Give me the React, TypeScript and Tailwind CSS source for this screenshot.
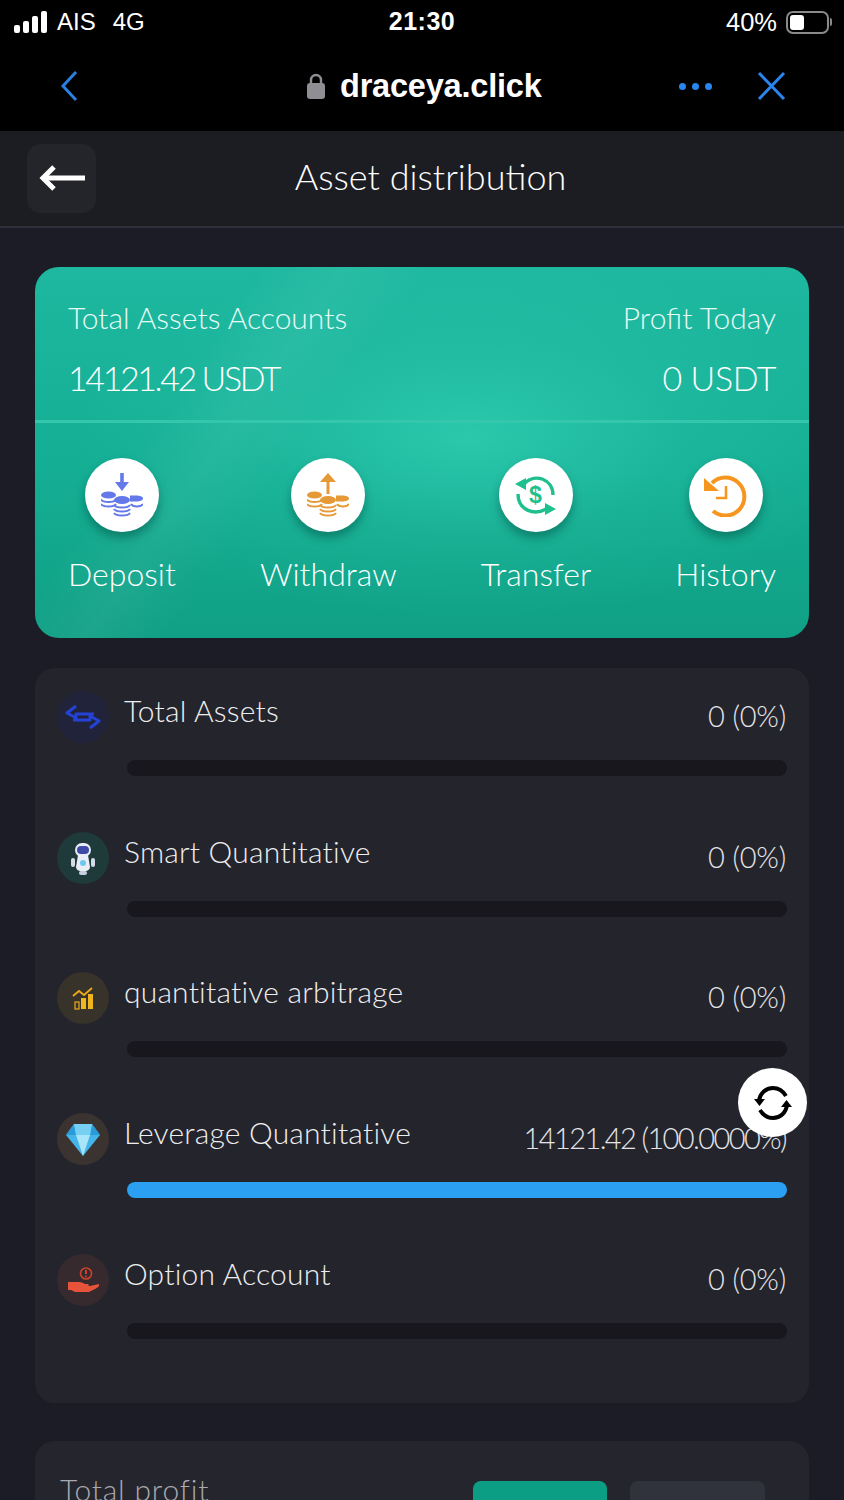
import type { ReactNode } from 'react';

function Coins({ color }: { color: string }) {
  const arcs = (x: number, w: number, ys: number[]) =>
    ys.map((y) => (
      <path key={`${x}-${y}`} d={`M${x} ${y}c2 3.4 ${w - 2} 3.4 ${w} 0`} fill="none" stroke={color} strokeWidth="2" />
    ));
  return (
    <>
      <ellipse cx="7.5" cy="22" rx="7.5" ry="3.6" fill={color} />
      {arcs(0, 15, [26.5, 31])}
      <path d="M29 22.5h6c4 0 7 1 7 3s-3 3-7 3h-6z" fill={color} />
      {arcs(30, 12, [31])}
      <ellipse cx="21" cy="27" rx="8" ry="4" fill={color} />
      {arcs(13, 16, [32, 36, 40])}
    </>
  );
}

function ActionIcon({ children }: { children: ReactNode }) {
  return (
    <div className="w-[74px] h-[74px] rounded-full bg-white flex items-center justify-center shadow-[0_6px_10px_rgba(0,70,60,0.45)]">
      {children}
    </div>
  );
}

function DepositIcon() {
  return (
    <svg width="42" height="44" viewBox="0 0 42 44">
      <path d="M21 0v11" stroke="#6379ea" strokeWidth="3.6" />
      <path d="M14 9h14l-7 9z" fill="#6379ea" />
      <Coins color="#6379ea" />
    </svg>
  );
}

function WithdrawIcon() {
  return (
    <svg width="42" height="44" viewBox="0 0 42 44">
      <path d="M21 7v14" stroke="#e59a37" strokeWidth="3" />
      <path d="M13 9h16L21 0z" fill="#e59a37" />
      <Coins color="#e59a37" />
    </svg>
  );
}

function TransferIcon() {
  return (
    <svg width="42" height="42" viewBox="0 0 42 42" fill="none">
      <path d="M10 9C20 -1 38 5 38 21" stroke="#1fc08e" strokeWidth="3.4" />
      <path d="M0 10l11-6v12z" fill="#1fc08e" />
      <path d="M3 20c0 16 16 22 28 15" stroke="#1fc08e" strokeWidth="3.4" />
      <path d="M41 35l-11 6V29z" fill="#1fc08e" />
      <text x="20.5" y="29" textAnchor="middle" fontSize="23" fontWeight="700" fill="#1fc08e" fontFamily="Liberation Sans, sans-serif">$</text>
    </svg>
  );
}

function HistoryIcon() {
  return (
    <svg width="43" height="43" viewBox="0 0 43 43" fill="none">
      <path d="M8 9A19 19 0 1 1 9 37" stroke="#f7961f" strokeWidth="4" />
      <path d="M0 4l15 13H0z" fill="#f7961f" />
      <path d="M22 12v12H12" stroke="#f7961f" strokeWidth="2.6" />
    </svg>
  );
}

function SwapIcon() {
  return (
    <svg width="36" height="26" viewBox="0 0 36 26" fill="none" stroke="#2443d6" strokeWidth="3" strokeLinejoin="round">
      <path d="M11 2L2 9l9 5v-4h18" />
      <path d="M25 24l9-7-9-5v4H8" />
    </svg>
  );
}

function RobotIcon() {
  return (
    <svg width="26" height="36" viewBox="0 0 26 36">
      <rect x="1" y="18" width="4" height="9" rx="2" fill="#d5dbe8" />
      <rect x="21" y="18" width="4" height="9" rx="2" fill="#d5dbe8" />
      <path d="M8 15h10l2 12c0 6-14 6-14 0z" fill="#e8edf6" />
      <circle cx="13" cy="23" r="3" fill="#6fc6ef" />
      <rect x="5" y="3" width="16" height="14" rx="7" fill="#e8edf6" />
      <rect x="7" y="6" width="12" height="8" rx="4" fill="#3d4aa8" />
      <rect x="9" y="31" width="8" height="4" rx="2" fill="#c7cfdf" />
    </svg>
  );
}

function ChartIcon() {
  return (
    <svg width="22" height="23" viewBox="0 0 22 23" fill="none">
      <path d="M1 9l6-5 5 4 8-7" stroke="#eda91c" strokeWidth="1.8" />
      <rect x="3" y="15" width="4" height="7" stroke="#eda91c" strokeWidth="1.2" />
      <rect x="9" y="11" width="5" height="11" fill="#f0b41f" />
      <rect x="16" y="7" width="5" height="15" fill="#f0b41f" />
    </svg>
  );
}

function DiamondIcon() {
  return (
    <svg width="36" height="36" viewBox="0 0 36 36">
      <path d="M9 3h18l8 11-17 21L1 14z" fill="#45b4ea" />
      <path d="M11 14h14l-7 21z" fill="#a8e5f8" />
      <path d="M9 3l2 11H1zM27 3l-2 11h10z" fill="#2b9ad8" />
      <path d="M9 3h18l-2 11H11z" fill="#76d0f2" />
    </svg>
  );
}

function HandIcon() {
  return (
    <svg width="32" height="26" viewBox="0 0 32 26" fill="none">
      <circle cx="19" cy="6.5" r="5.5" stroke="#c9432d" strokeWidth="1.6" />
      <path d="M19 3v4" stroke="#c9432d" strokeWidth="2" />
      <circle cx="19" cy="9.5" r="1" fill="#c9432d" />
      <path d="M1 15h11c3 0 4 1 6 2h3c1 1 1 2 0 2h-5 7l9-2c1 2-1 3-4 5l-6 3H8l-4-2H1z" fill="#e4533a" />
    </svg>
  );
}

const rows = [
  { name: 'Total Assets', value: '0 (0%)', pct: 0, tint: 'bg-[#20233a]', icon: <SwapIcon />, tracking: 'tracking-[-0.2px]' },
  { name: 'Smart Quantitative', value: '0 (0%)', pct: 0, tint: 'bg-[#1f3a3a]', icon: <RobotIcon />, tracking: 'tracking-[-0.2px]' },
  { name: 'quantitative arbitrage', value: '0 (0%)', pct: 0, tint: 'bg-[#37322a]', icon: <ChartIcon />, tracking: 'tracking-[-0.2px]' },
  { name: 'Leverage Quantitative', value: '14121.42 (100.0000%)', pct: 100, tint: 'bg-[#3b3330]', icon: <DiamondIcon />, tracking: 'tracking-[-1.6px]' },
  { name: 'Option Account', value: '0 (0%)', pct: 0, tint: 'bg-[#372a2e]', icon: <HandIcon />, tracking: 'tracking-[-0.2px]' },
];

const actions = [
  { label: 'Deposit', icon: <DepositIcon /> },
  { label: 'Withdraw', icon: <WithdrawIcon /> },
  { label: 'Transfer', icon: <TransferIcon /> },
  { label: 'History', icon: <HistoryIcon /> },
];

export default function App() {
  return (
    <div className="relative h-[1500px] overflow-hidden bg-[#1b1c25] font-['Lato',sans-serif] font-light text-white">
      {/* phone chrome */}
      <div className="h-[131px] bg-black font-['Liberation_Sans',sans-serif]">
        <div className="h-[44px] pl-[14px] pr-[12px] flex items-center justify-between text-[24px]">
          <div className="flex items-center flex-1">
            <svg width="35" height="22" viewBox="0 0 35 22" fill="white">
              <rect x="0" y="14" width="6" height="8" rx="2" />
              <rect x="9" y="10" width="6" height="12" rx="2" />
              <rect x="18" y="5" width="6" height="17" rx="2" />
              <rect x="27" y="0" width="6" height="22" rx="2" />
            </svg>
            <span className="ml-[8px] font-normal">AIS</span>
            <span className="ml-[17px] font-normal">4G</span>
          </div>
          <span className="-ml-[2px] font-bold text-[25px] tracking-[0.5px]">21:30</span>
          <div className="flex items-center justify-end flex-1">
            <span className="text-[25.5px] font-normal -translate-x-[2px]">40%</span>
            <div className="ml-[7px] w-[43px] h-[23px] rounded-[7px] border-2 border-[#8a8a8a] p-[2px]">
              <div className="w-[14px] h-full rounded-[3px] bg-white" />
            </div>
            <div className="ml-[1px] w-[2px] h-[8px] rounded-r bg-[#8a8a8a]" />
          </div>
        </div>
        <div className="h-[84px] pl-[60px] pr-[58px] flex items-center">
          <svg width="18" height="32" viewBox="0 0 18 32" fill="none" stroke="#2a7fe0" strokeWidth="3">
            <path d="M16 2L3 16l13 14" />
          </svg>
          <svg className="ml-[228px]" width="20" height="28" viewBox="0 0 20 28" fill="#8e8e93">
            <path d="M5 12V8a5 5 0 0 1 10 0v4" fill="none" stroke="#8e8e93" strokeWidth="2.4" />
            <rect x="1" y="11" width="18" height="16" rx="3" />
          </svg>
          <span className="ml-[14px] text-[32.5px] font-bold tracking-[-0.2px]">draceya.click</span>
          <div className="ml-auto mr-[45px] flex items-center gap-[6px]">
            <span className="w-[7px] h-[7px] rounded-full bg-[#2a85ee]" />
            <span className="w-[7px] h-[7px] rounded-full bg-[#2a85ee]" />
            <span className="w-[7px] h-[7px] rounded-full bg-[#2a85ee]" />
          </div>
          <svg width="29" height="30" viewBox="0 0 29 30" fill="none" stroke="#2a85ee" strokeWidth="3">
            <path d="M2 2l25 26M27 2L2 28" />
          </svg>
        </div>
      </div>

      {/* header */}
      <div className="h-[97px] bg-[#1c1d22] border-b-2 border-[#2e2d39] pl-[27px] flex items-center">
        <div className="w-[69px] h-[69px] rounded-[14px] bg-[#24242b] flex items-center justify-center">
          <svg width="46" height="28" viewBox="0 0 46 28" fill="none" stroke="white" strokeWidth="5">
            <path d="M46 13H4" />
            <path d="M15 2L4 13l11 11" />
          </svg>
        </div>
        <div className="flex-1 -mt-[6px] text-center pr-[79px] text-[36px] leading-[44px]">Asset distribution</div>
      </div>

      <div className="px-[35px] pt-[39px]">
        {/* balance card */}
        <div className="relative h-[371px] rounded-[24px] overflow-hidden bg-[linear-gradient(180deg,#1eb8a0_0%,#14ae94_55%,#10a085_100%)]">
          <div className="absolute inset-0 bg-[radial-gradient(ellipse_at_56%_46%,rgba(70,230,200,0.45)_0%,rgba(70,230,200,0.12)_35%,rgba(0,0,0,0)_65%)]" />
          <div className="absolute inset-0 bg-[linear-gradient(125deg,rgba(255,255,255,0)_22%,rgba(255,255,255,0.05)_30%,rgba(255,255,255,0)_38%)]" />
          <div className="relative">
            <div className="h-[156px] px-[33px] pt-[32px] border-b-[3px] border-[#35c6ae]">
              <div className="flex justify-between text-[30px] leading-[36px] text-[#e6faf6]">
                <span>Total Assets Accounts</span>
                <span>Profit Today</span>
              </div>
              <div className="mt-[22px] flex justify-between text-[34px] leading-[42px]">
                <span className="tracking-[-2.4px]">14121.42 USDT</span>
                <span className="tracking-[-0.4px]">0 USDT</span>
              </div>
            </div>
            <div className="px-[33px] pt-[35px] flex justify-between">
              {actions.map((a) => (
                <div key={a.label} className="flex flex-col items-center">
                  <ActionIcon>{a.icon}</ActionIcon>
                  <div className="mt-[22px] text-[32px] leading-[40px]">{a.label}</div>
                </div>
              ))}
            </div>
          </div>
        </div>

        {/* distribution list */}
        <div className="mt-[30px] h-[735px] rounded-[20px] bg-[#24242c] pt-[23px] pl-[22px] pr-[22px] flex flex-col gap-[55.67px]">
          {rows.map((r) => (
            <div key={r.name} className="flex">
              <div className={`w-[52px] h-[52px] shrink-0 rounded-full flex items-center justify-center ${r.tint}`}>
                {r.icon}
              </div>
              <div className="ml-[18px] flex-1">
                <div className="h-[53px] flex justify-between">
                  <span className="-ml-[3px] -mt-[1px] text-[30px] leading-[40px] tracking-[0.2px] text-[#eeeef0]">{r.name}</span>
                  <span className={`mt-[5px] pr-[1px] text-[29px] leading-[40px] text-[#e4e4e8] ${r.tracking}`}>{r.value}</span>
                </div>
                <div className="mt-[16px] h-[16px] rounded-full bg-[#17171d]">
                  <div className="h-full rounded-full bg-[#2b9ff2]" style={{ width: `${r.pct}%` }} />
                </div>
              </div>
            </div>
          ))}
        </div>

        {/* total profit */}
        <div className="mt-[38px] h-[120px] rounded-[20px] bg-[#25252d] pl-[25px] pr-[44px] pt-[30px] flex justify-between">
          <span className="text-[30px] leading-[36px] tracking-[0.8px] text-[#a9a9ae]">Total profit</span>
          <div className="pt-[10px] flex gap-[23px]">
            <div className="w-[134px] h-[60px] rounded-[8px] bg-[#0b9e85]" />
            <div className="w-[135px] h-[60px] rounded-[8px] bg-[#31333c]" />
          </div>
        </div>
      </div>

      {/* floating refresh */}
      <div className="absolute left-[738px] top-[1068px] w-[69px] h-[69px] rounded-full bg-white flex items-center justify-center">
        <svg width="40" height="36" viewBox="0 0 40 36" fill="none" stroke="black" strokeWidth="4">
          <path d="M6 16C7 8 13 3 20 3c6 0 10 3 13 8" />
          <path d="M34 20c-1 8-7 13-14 13-6 0-10-3-13-8" />
          <path d="M1 14h11l-5.500 7z" fill="black" stroke="none" />
          <path d="M39 22H28l5.500-7z" fill="black" stroke="none" />
        </svg>
      </div>
    </div>
  );
}
